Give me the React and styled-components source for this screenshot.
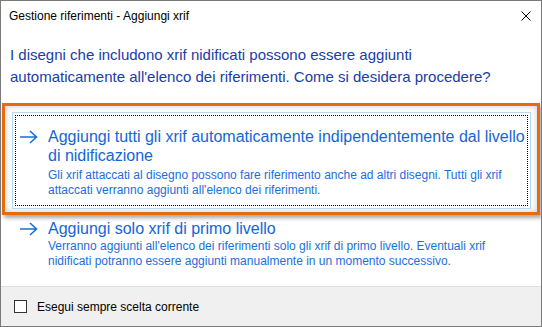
import React from "react";
import styled, { createGlobalStyle } from "styled-components";

const GlobalStyle = createGlobalStyle`
  html, body {
    margin: 0;
    padding: 0;
    background: #ffffff;
  }
  * {
    box-sizing: border-box;
  }
`;

const FONT = `"Segoe UI", "Liberation Sans", Arial, sans-serif`;

const Window = styled.div`
  width: 542px;
  height: 327px;
  border: 1px solid #7a7a7a;
  background: #ffffff;
  display: flex;
  flex-direction: column;
  font-family: ${FONT};
  overflow: hidden;
`;

const TitleBar = styled.div`
  height: 30px;
  flex: none;
  display: flex;
  align-items: center;
  justify-content: space-between;
  padding: 0 10px 0 8px;
  font-size: 12px;
  color: #000000;
`;

const CloseButton = styled.div`
  width: 10px;
  height: 10px;
  display: flex;
  svg {
    display: block;
  }
`;

const Body = styled.div`
  flex: 1;
  display: flex;
  flex-direction: column;
`;

const Instruction = styled.div`
  padding: 13px 9px 0 9px;
  font-size: 15px;
  line-height: 22px;
  color: #1a3da6;
  height: 72px;
  white-space: nowrap;
`;

const Highlight = styled.div`
  margin: 0 1px 0 1px;
  border: 3px solid #e46c0a;
  padding: 6px 6px 3px 7px;
  box-shadow: 2px 3px 4px rgba(0, 0, 0, 0.35), inset 0 0 6px rgba(0, 0, 0, 0.22);
  background: #ffffff;
`;

const CommandLink = styled.div`
  border: 1px solid ${(p) => (p.$hover ? "#b6d9f4" : "transparent")};
  padding: 2px;
  margin: ${(p) => p.$margin || "0"};
`;

const FocusFrame = styled.div`
  border: 1px dotted ${(p) => (p.$focused ? "#000000" : "transparent")};
  display: grid;
  grid-template-columns: 29px 1fr;
  padding: ${(p) => p.$pad || "11px 8px 8px 3px"};
`;

const Arrow = styled.div`
  padding-top: 3px;
  svg {
    display: block;
  }
`;

const LinkText = styled.div`
  display: flex;
  flex-direction: column;
  white-space: nowrap;
`;

const LinkTitle = styled.div`
  font-size: 16px;
  line-height: 19px;
  color: #1565d6;
`;

const LinkDesc = styled.div`
  font-size: 12px;
  line-height: 14.5px;
  color: #1a6fdc;
  margin-top: ${(p) => p.$gap || "3px"};
`;

const Footer = styled.div`
  height: 40px;
  flex: none;
  border-top: 1px solid #dfdfdf;
  background: #f0f0f0;
  display: flex;
  align-items: center;
  padding-left: 13px;
  gap: 10px;
  font-size: 12px;
  color: #000000;
`;

const CheckBox = styled.div`
  width: 13px;
  height: 13px;
  border: 1px solid #333333;
  background: #ffffff;
`;

const ArrowIcon = () => (
  <svg width="19" height="14" viewBox="0 0 19 14">
    <path
      d="M1 7 H17.5 M11 1 L17.5 7 L11 13"
      fill="none"
      stroke="#1b6fd8"
      strokeWidth="1.6"
    />
  </svg>
);

const CloseIcon = () => (
  <svg width="10" height="10" viewBox="0 0 10 10">
    <path d="M0.5 0.5 L9.5 9.5 M9.5 0.5 L0.5 9.5" stroke="#000" strokeWidth="1" />
  </svg>
);

const links = [
  {
    title: ["Aggiungi tutti gli xrif automaticamente indipendentemente dal livello", "di nidificazione"],
    desc: [
      "Gli xrif attaccati al disegno possono fare riferimento anche ad altri disegni. Tutti gli xrif",
      "attaccati verranno aggiunti all'elenco dei riferimenti.",
    ],
  },
  {
    title: ["Aggiungi solo xrif di primo livello"],
    desc: [
      "Verranno aggiunti all'elenco dei riferimenti solo gli xrif di primo livello. Eventuali xrif",
      "nidificati potranno essere aggiunti manualmente in un momento successivo.",
    ],
  },
];

const Lines = ({ lines }) =>
  lines.map((l, i) => (
    <React.Fragment key={i}>
      {i > 0 && <br />}
      {l}
    </React.Fragment>
  ));

const Link = ({ data, hover, focused, pad, margin, gap }) => (
  <CommandLink $hover={hover} $margin={margin}>
    <FocusFrame $focused={focused} $pad={pad}>
      <Arrow>
        <ArrowIcon />
      </Arrow>
      <LinkText>
        <LinkTitle>
          <Lines lines={data.title} />
        </LinkTitle>
        <LinkDesc $gap={gap}>
          <Lines lines={data.desc} />
        </LinkDesc>
      </LinkText>
    </FocusFrame>
  </CommandLink>
);

export default function App() {
  return (
    <>
      <GlobalStyle />
      <Window>
        <TitleBar>
          <span>Gestione riferimenti - Aggiungi xrif</span>
          <CloseButton>
            <CloseIcon />
          </CloseButton>
        </TitleBar>
        <Body>
          <Instruction>
            I disegni che includono xrif nidificati possono essere aggiunti
            <br />
            automaticamente all'elenco dei riferimenti. Come si desidera procedere?
          </Instruction>
          <Highlight>
            <Link data={links[0]} hover focused />
          </Highlight>
          <Link
            data={links[1]}
            margin="0 10px 0 11px"
            pad="0 8px 8px 3px"
            gap="1px"
          />
        </Body>
        <Footer>
          <CheckBox />
          <span>Esegui sempre scelta corrente</span>
        </Footer>
      </Window>
    </>
  );
}
